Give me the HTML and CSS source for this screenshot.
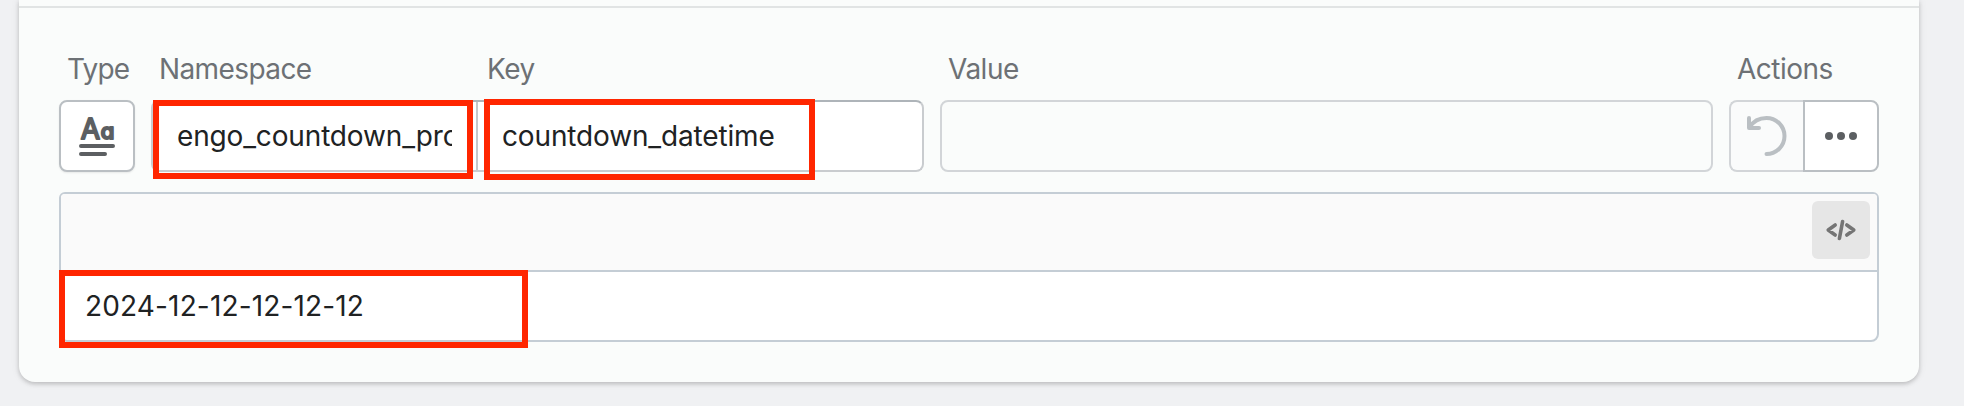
FILE: index.html
```
<!DOCTYPE html>
<html lang="en">
<head>
<meta charset="utf-8">
<title>Metafields</title>
<link rel="stylesheet" href="styles.css">
</head>
<body>
<main class="card">
  <div class="card-top"></div>
  <section class="metafield">
    <div class="row labels">
      <span class="label label-type">Type</span>
      <div class="label-pair"><span class="label label-namespace">Namespace</span><span class="label label-key">Key</span></div>
      <span class="label label-value">Value</span>
      <span class="label label-actions">Actions</span>
    </div>
    <div class="row fields">
      <button class="type-button" aria-label="Text type">
        <svg width="40" height="44" viewBox="0 0 40 44">
          <text class="type-glyph" x="13.500" y="25">A</text>
          <text class="type-glyph type-glyph-small" x="30.500" y="25">a</text>
          <path class="type-line" d="M4 32H36M4 40H28"/>
        </svg>
      </button>
      <div class="pair">
        <div class="field namespace"><span class="clip">engo_countdown_product</span><i class="mark mark-namespace"></i></div>
        <div class="field key"><span class="key-text">countdown_datetime</span><i class="mark mark-key"></i></div>
      </div>
      <div class="value"></div>
      <div class="actions">
        <button class="action undo" aria-label="Undo">
          <svg width="44" height="44" viewBox="0 0 44 44"><path d="M4 4V14H14M4.500 13.500C8 7.500 14 4 21.500 4A18 18 0 0 1 21.500 40"/></svg>
        </button>
        <button class="action more" aria-label="More">
          <svg width="32" height="8" viewBox="0 0 32 8"><circle cx="4" cy="4" r="4"/><circle cx="16" cy="4" r="4"/><circle cx="28" cy="4" r="4"/></svg>
        </button>
      </div>
    </div>
    <div class="editor">
      <div class="toolbar">
        <button class="code" aria-label="Show HTML">
          <svg width="32" height="22" viewBox="0 0 32 22"><path d="M10.200 6L3.200 11L10.200 16M21.800 6L28.800 11L21.800 16"/><path d="M17.600 2.500L14.400 19.500"/></svg>
        </button>
      </div>
      <div class="content"><span class="date">2024-12-12-12-12-12</span><i class="mark mark-date"></i></div>
    </div>
  </section>
</main>
</body>
</html>
```
FILE: styles.css
```
* { box-sizing: border-box; }
body {
  margin: 0;
  height: 406px;
  overflow: hidden;
  background: #f0f1f3;
  color: #202223;
  font: 400 28px/40px Inter, "Liberation Sans", sans-serif;
}
button { margin: 0; padding: 0; font: inherit; }
svg { display: block; overflow: visible; }
.card {
  width: 1900px;
  height: 382px;
  margin-left: 19px;
  background: #fafcfb;
  border-radius: 0 0 16px 16px;
  box-shadow: 0 0 10px rgba(23, 24, 24, .08), 0 2px 4px rgba(0, 0, 0, .18);
}
.card-top { height: 8px; border-bottom: 2px solid #e1e4e4; }
.metafield { padding: 41px 40px 0; }
.row {
  display: grid;
  grid-template-columns: 76px 773px 773px 150px;
  column-gap: 16px;
}
.labels { height: 51px; color: #6d7175; letter-spacing: -.5px; }
.label { white-space: nowrap; }
.label-type { padding-left: 8px; letter-spacing: -.8px; }
.label-pair { display: grid; grid-template-columns: 327px 1fr; }
.label-namespace { padding-left: 8px; letter-spacing: -.6px; }
.label-key { padding-left: 9px; }
.label-value, .label-actions { padding-left: 8px; }
.fields { height: 72px; }
.type-button {
  display: grid;
  place-items: center;
  background: #fff;
  border: 2px solid #babfc3;
  border-radius: 8px;
  box-shadow: 0 1px 2px rgba(0, 0, 0, .08);
}
.type-glyph {
  fill: #5c5f62;
  stroke: #5c5f62;
  stroke-width: 2;
  stroke-linejoin: round;
  text-anchor: middle;
  font: 400 28px Inter, sans-serif;
}
.type-glyph-small { font-size: 22px; font-weight: 500; font-feature-settings: "cv11"; }
.type-line { fill: none; stroke: #5c5f62; stroke-width: 4; stroke-linecap: round; }
.pair {
  display: grid;
  grid-template-columns: 325px 1fr;
  background: #fff;
  border: 2px solid #c9cccf;
  border-top-color: #aeb4b9;
  border-radius: 8px;
  letter-spacing: -.15px;
}
.field { position: relative; display: flex; align-items: center; white-space: nowrap; }
.namespace { border-right: 2px solid #c4c8cc; padding-left: 24px; }
.clip { width: 275px; overflow: hidden; }
.key { padding-left: 24px; }
.mark { position: absolute; border: 6px solid #ff2600; }
.mark-namespace { left: 0; top: -2px; width: 320px; height: 79px; }
.mark-key { left: 6px; top: -3px; width: 331px; height: 81px; }
.value { border: 2px solid #d2d5d8; border-radius: 8px; }
.actions { display: grid; grid-template-columns: 74px 76px; }
.action { display: grid; place-items: center; border: 2px solid #babfc3; }
.undo { border-color: #d2d5d8; border-right: 0; border-radius: 8px 0 0 8px; background: #fafbfb; }
.undo path { fill: none; stroke: #babfc3; stroke-width: 4; stroke-linecap: round; stroke-linejoin: round; }
.more { border-radius: 0 8px 8px 0; background: #fff; fill: #5c5f62; }
.editor {
  height: 150px;
  margin-top: 20px;
  background: #fff;
  border: 2px solid #c4cdd5;
  border-radius: 6px 6px 8px 8px;
}
.toolbar {
  display: flex;
  justify-content: flex-end;
  height: 78px;
  padding: 7px;
  background: #fafafa;
  border-bottom: 2px solid #c4cdd5;
  border-radius: 4px 4px 0 0;
}
.code {
  display: grid;
  place-items: center;
  width: 58px;
  height: 58px;
  border: 0;
  border-radius: 6px;
  background: #e6e6e6;
}
.code path { fill: none; stroke: #757575; stroke-width: 3.6; stroke-linecap: round; stroke-linejoin: round; }
.content { position: relative; height: 68px; padding: 14px 0 0 24px; letter-spacing: .15px; }
.mark-date { left: -2px; top: -2px; width: 469px; height: 78px; }
```
